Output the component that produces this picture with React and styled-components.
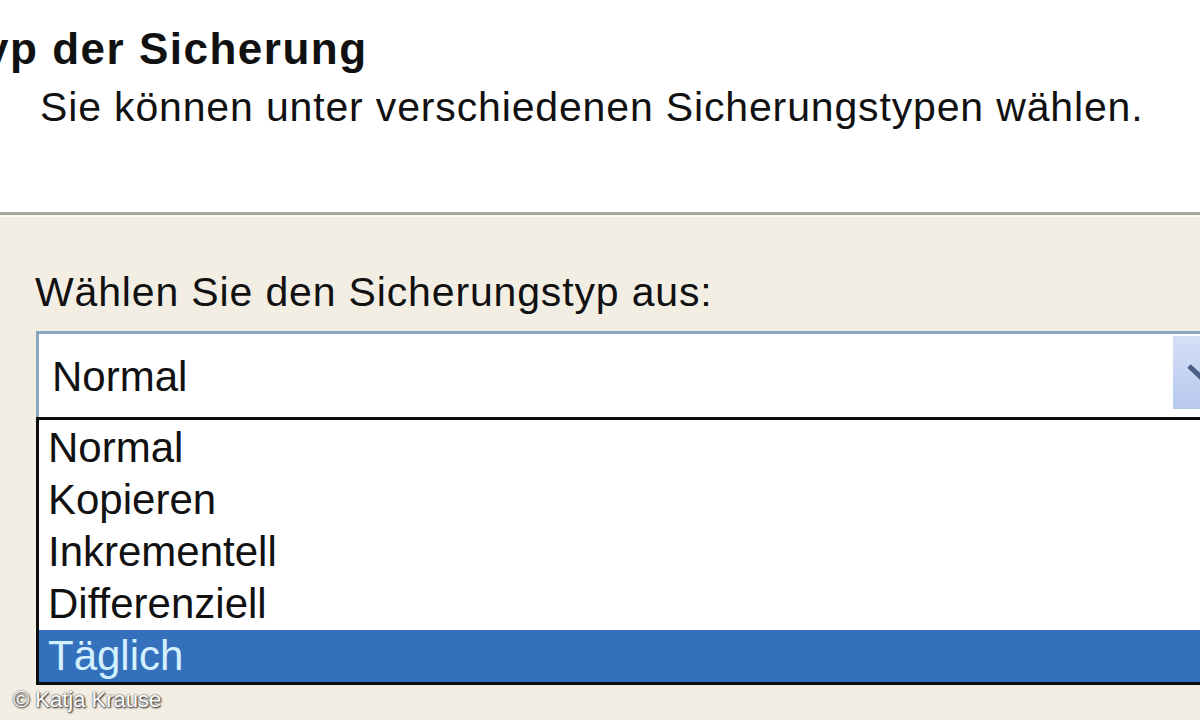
import styled, { createGlobalStyle } from "styled-components";

const GlobalStyle = createGlobalStyle`
  html, body {
    margin: 0;
    padding: 0;
    background: #f2eee4;
  }
  * { box-sizing: border-box; }
`;

const types = ["Normal", "Kopieren", "Inkrementell", "Differenziell", "Täglich"];

const Page = styled.div`
  position: relative;
  width: 1200px;
  height: 720px;
  overflow: hidden;
  font-family: "Liberation Sans", Arial, sans-serif;
  color: #111;
  background: #f2eee4;
  display: flex;
  flex-direction: column;
`;

const Header = styled.header`
  height: 215px;
  flex: none;
  background: #fff;
  padding-top: 23px;
  border-bottom: 3px solid #aaa89c;
  box-shadow: 0 2px 0 #fbfaf6;
`;

const Title = styled.h1`
  margin: 0 0 0 -41px;
  font-size: 44px;
  line-height: 52px;
  font-weight: bold;
  letter-spacing: 1.5px;
  white-space: nowrap;
`;

const Subtitle = styled.p`
  margin: 8px 0 0 40px;
  font-size: 41px;
  line-height: 48px;
  letter-spacing: 0.85px;
  white-space: nowrap;
`;

const Body = styled.main`
  flex: 1;
  padding: 53px 0 0 36px;
`;

const Label = styled.div`
  font-size: 41px;
  line-height: 48px;
  letter-spacing: 0.85px;
  white-space: nowrap;
  margin-left: -1px;
`;

const Combo = styled.div`
  margin-top: 15px;
  width: 1200px;
  height: 86px;
  border: 3px solid #8da6c0;
  border-bottom: none;
  background: #fff;
  display: flex;
  align-items: stretch;
`;

const ComboValue = styled.div`
  flex: 1;
  padding: 3px 0 0 13px;
  font-size: 42px;
  line-height: 80px;
`;

const ComboButton = styled.div`
  flex: none;
  width: 60px;
  margin: 2px 0 8px;
  background: linear-gradient(180deg, #d4e0f7 0%, #c3d2f2 60%, #b7c8ee 100%);
  display: flex;
  align-items: center;
  justify-content: center;
`;

const List = styled.ul`
  list-style: none;
  margin: 0;
  padding: 2px 0 0;
  width: 1200px;
  border: 3px solid #0c0c0c;
  background: #fff;
`;

const Item = styled.li`
  height: 52px;
  padding-left: 9px;
  font-size: 42px;
  line-height: 52px;
  white-space: nowrap;
  background: ${(p) => (p.$selected ? "#3570bd" : "#fff")};
  color: ${(p) => (p.$selected ? "#d3f0ff" : "#111")};
`;

const Credit = styled.div`
  position: absolute;
  left: 13px;
  bottom: 8px;
  font-family: "Liberation Sans", Arial, sans-serif;
  font-size: 22px;
  line-height: 24px;
  color: #fff;
  text-shadow: 0 0 2px #333, 1px 1px 2px #222;
`;

export default function App() {
  return (
    <>
      <GlobalStyle />
      <Page>
        <Header>
          <Title>Typ der Sicherung</Title>
          <Subtitle>Sie können unter verschiedenen Sicherungstypen wählen.</Subtitle>
        </Header>
        <Body>
          <Label>Wählen Sie den Sicherungstyp aus:</Label>
          <Combo>
            <ComboValue>Normal</ComboValue>
            <ComboButton>
              <svg width="34" height="20" viewBox="0 0 34 20">
                <path d="M3 3 L17 16 L31 3" fill="none" stroke="#4a5d85" strokeWidth="5" />
              </svg>
            </ComboButton>
          </Combo>
          <List>
            {types.map((t, i) => (
              <Item key={t} $selected={i === types.length - 1}>
                {t}
              </Item>
            ))}
          </List>
        </Body>
        <Credit>© Katja Krause</Credit>
      </Page>
    </>
  );
}
